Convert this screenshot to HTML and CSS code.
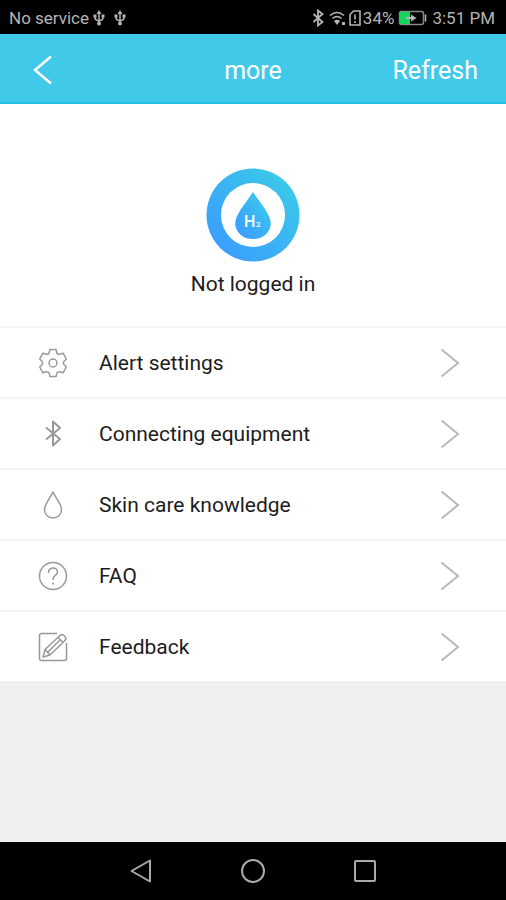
FILE: index.html
```html
<!DOCTYPE html>
<html lang="en">
<head>
<meta charset="utf-8">
<meta name="viewport" content="width=device-width, initial-scale=1">
<title>more</title>
<link rel="stylesheet" href="styles.css">
</head>
<body>
<div class="status">
  <span>No service</span>
  <svg class="usb" width="12" height="18" viewBox="0 0 12 18"><path d="M6 3v11M2 7v2q0 2 4 3M10 7v2q0 2-4 3"/><path class="solid" d="M6 1l2.500 4h-5zM.5 5.500h3v3h-3zM8.500 5.500h3v3h-3z"/><circle class="solid" cx="6" cy="14.500" r="2"/></svg>
  <svg class="usb second" width="12" height="18" viewBox="0 0 12 18"><path d="M6 3v11M2 7v2q0 2 4 3M10 7v2q0 2-4 3"/><path class="solid" d="M6 1l2.500 4h-5zM.5 5.500h3v3h-3zM8.500 5.500h3v3h-3z"/><circle class="solid" cx="6" cy="14.500" r="2"/></svg>
  <div class="indicators">
    <svg width="12" height="18" viewBox="0 0 12 18"><path stroke-width="1.800" d="M1.500 5l9 8L6 16.500v-15L10.500 5l-9 8"/></svg>
    <svg class="wifi" width="18" height="18" viewBox="0 0 18 18"><path stroke-width="1.600" d="M1 6.500q7-6 14 0M3.500 9.500q4.500-4 9 0"/><path class="solid" d="M5 12q3-2.500 6 0L8 16zM13 13h3v3h-3z"/></svg>
    <svg width="12" height="18" viewBox="0 0 12 18"><path stroke-width="1.600" d="M4.500 2H11v14H1V5.500zM6 5.500v5M6 12v2"/></svg>
    <span class="percent">34%</span>
    <svg class="battery" width="30" height="18" viewBox="0 0 30 18"><rect class="shell" x="1.500" y="2.500" width="24" height="13" rx="2"/><path class="charge" d="M2 3h10v12H2z"/><path d="M27.500 5.500v7"/><path class="solid" d="M8 8h5V5.500L18.500 9 13 12.500V10H8z"/></svg>
    <span>3:51 PM</span>
  </div>
</div>
<header class="bar">
  <button class="back" aria-label="Back"><svg width="20" height="30" viewBox="0 0 20 30"><path d="M18 1.500L2 15l16 13.500"/></svg></button>
  <h1>more</h1>
  <button class="refresh">Refresh</button>
</header>
<main>
  <section class="profile">
    <svg width="94" height="94" viewBox="0 0 94 94">
      <defs><linearGradient id="blue" x1="0" y1="1" x2="1" y2="0"><stop offset=".1" stop-color="#3b9cff"/><stop offset=".9" stop-color="#3acbe9"/></linearGradient></defs>
      <circle cx="47" cy="47" r="46.500" fill="url(#blue)"/>
      <circle cx="47" cy="47" r="32" fill="#fff"/>
      <path fill="url(#blue)" d="M47 24Q49 27 59 41C64 49 66 54 64 60C61 68 54 71 47 71S33 68 30 60C28 54 30 49 35 41Q45 27 47 24z"/>
      <text class="h" x="38" y="59">H</text><text class="sub" x="50" y="59">2</text>
    </svg>
    <p>Not logged in</p>
  </section>
  <nav>
    <a href="#alerts"><svg class="icon" viewBox="0 0 30 30"><path d="M11.900 1.600H18.100L18.700 4.600Q19.500 6.500 21.500 6.300L25.100 5.200L28.300 11L26 13.200Q24.600 15 26 16.800L28.300 19L25.100 24.800L21.500 23.700Q19.500 23.500 18.700 25.400L18.100 28.400H11.900L11.300 25.400Q10.500 23.500 8.500 23.700L4.900 24.800L1.700 19L4 16.800Q5.400 15 4 13.200L1.700 11L4.900 5.200L8.500 6.300Q10.500 6.500 11.300 4.600z"/><circle cx="15" cy="15" r="4"/></svg><span>Alert settings</span><svg class="next" viewBox="0 0 20 30"><path d="M1.500 1.500L18 15 1.500 28.500"/></svg></a>
    <a href="#equipment"><svg class="icon" viewBox="0 0 30 30"><path stroke-width="2" d="M8 8.500L22 20l-7 6.500v-24L22 9 8 20.500"/></svg><span>Connecting equipment</span><svg class="next" viewBox="0 0 20 30"><path d="M1.500 1.500L18 15 1.500 28.500"/></svg></a>
    <a href="#skin"><svg class="icon" viewBox="0 0 30 30"><path d="M15 2C13 7 6.500 14 6.500 19.500C6.500 25 10.500 28 15 28S23.500 25 23.500 19.500C23.500 14 17 7 15 2z"/></svg><span>Skin care knowledge</span><svg class="next" viewBox="0 0 20 30"><path d="M1.500 1.500L18 15 1.500 28.500"/></svg></a>
    <a href="#faq"><svg class="icon" viewBox="0 0 30 30"><circle cx="15" cy="15" r="13.500"/><path d="M10.500 12C10.500 5.500 19.500 5.500 19.500 11C19.500 14.500 15 14 15 19M15 21.500v2"/></svg><span>FAQ</span><svg class="next" viewBox="0 0 20 30"><path d="M1.500 1.500L18 15 1.500 28.500"/></svg></a>
    <a href="#feedback"><svg class="icon" viewBox="0 0 30 30"><path d="M19 1.500H3.500q-2 0-2 2v23q0 2 2 2h23q2 0 2-2V11"/><path d="M5 25l2-7.500L22 3.500q2-2 4.500.500t.5 4.500L12 23zM7 17.500l5 5.500M20 5.500l5 5M10 20L22 8"/></svg><span>Feedback</span><svg class="next" viewBox="0 0 20 30"><path d="M1.500 1.500L18 15 1.500 28.500"/></svg></a>
  </nav>
</main>
<footer class="keys">
  <button aria-label="Back"><svg width="24" height="26" viewBox="0 0 24 26"><path d="M21 2.500v21L2.500 13z"/></svg></button>
  <button aria-label="Home"><svg width="26" height="26" viewBox="0 0 26 26"><circle cx="13" cy="13" r="11"/></svg></button>
  <button aria-label="Recent apps"><svg width="24" height="26" viewBox="0 0 24 26"><rect x="2" y="3" width="20" height="20" rx="1"/></svg></button>
</footer>
</body>
</html>
```
FILE: styles.css
```css
* { box-sizing: border-box; }
body {
  margin: 0;
  min-height: 100vh;
  display: flex;
  flex-direction: column;
  background: #f0f0f0;
  color: #1c1c1c;
  font-family: Roboto, "Liberation Sans", sans-serif;
}
svg { display: block; fill: none; flex: none; }
button { border: 0; padding: 0; background: none; font: inherit; color: inherit; }
.status {
  display: flex;
  align-items: center;
  height: 34px;
  padding: 2px 11px 0 9px;
  background: #000;
  color: #b5b5b5;
  font-size: 17px;
}
.status svg { stroke: #b5b5b5; stroke-width: 1.5; }
.status .solid { fill: #b5b5b5; stroke: none; }
.status .shell { stroke: #888; }
.status .charge { fill: #12d65c; stroke: none; }
.usb { margin-left: 4px; }
.usb.second { margin-left: 9px; }
.indicators { display: flex; align-items: center; margin-left: auto; }
.wifi { margin: 0 2px 0 5px; }
.percent { margin-left: 2px; }
.battery { margin: 0 4px; }
.bar {
  display: grid;
  grid-template-columns: 1fr auto 1fr;
  align-items: center;
  height: 70px;
  padding: 4px 28px 0;
  background: #40c9e9;
  border-bottom: 2px solid #25bfe3;
  color: #fff;
  font-size: 25px;
}
.bar h1 { margin: 0; font: inherit; }
.back { justify-self: start; margin-left: 5px; }
.back svg { stroke: #fff; stroke-width: 2.5; }
.refresh { justify-self: end; }
.profile {
  display: flex;
  flex-direction: column;
  align-items: center;
  height: 222px;
  padding-top: 64px;
  background: #fff;
  font-size: 21px;
}
.profile p { margin: 10px 0 0; line-height: 24px; }
.profile text { fill: #fff; font-weight: 500; }
.h { font-size: 16px; }
.sub { font-size: 8px; }
nav a {
  display: flex;
  align-items: center;
  height: 71px;
  padding: 0 46px 0 38px;
  background: #fff;
  border-top: 2px solid #f3f3f3;
  color: inherit;
  text-decoration: none;
  font-size: 21px;
}
nav span { flex: 1; margin-left: 31px; }
.icon { width: 30px; height: 30px; stroke: #999; stroke-width: 1.5; stroke-linejoin: round; }
.next { width: 20px; height: 30px; stroke: #b8b8b8; stroke-width: 2; }
.keys {
  display: flex;
  justify-content: center;
  align-items: center;
  gap: 87px;
  height: 58px;
  margin-top: auto;
  background: #000;
}
.keys svg { stroke: #aaa; stroke-width: 2; stroke-linejoin: round; }
```
